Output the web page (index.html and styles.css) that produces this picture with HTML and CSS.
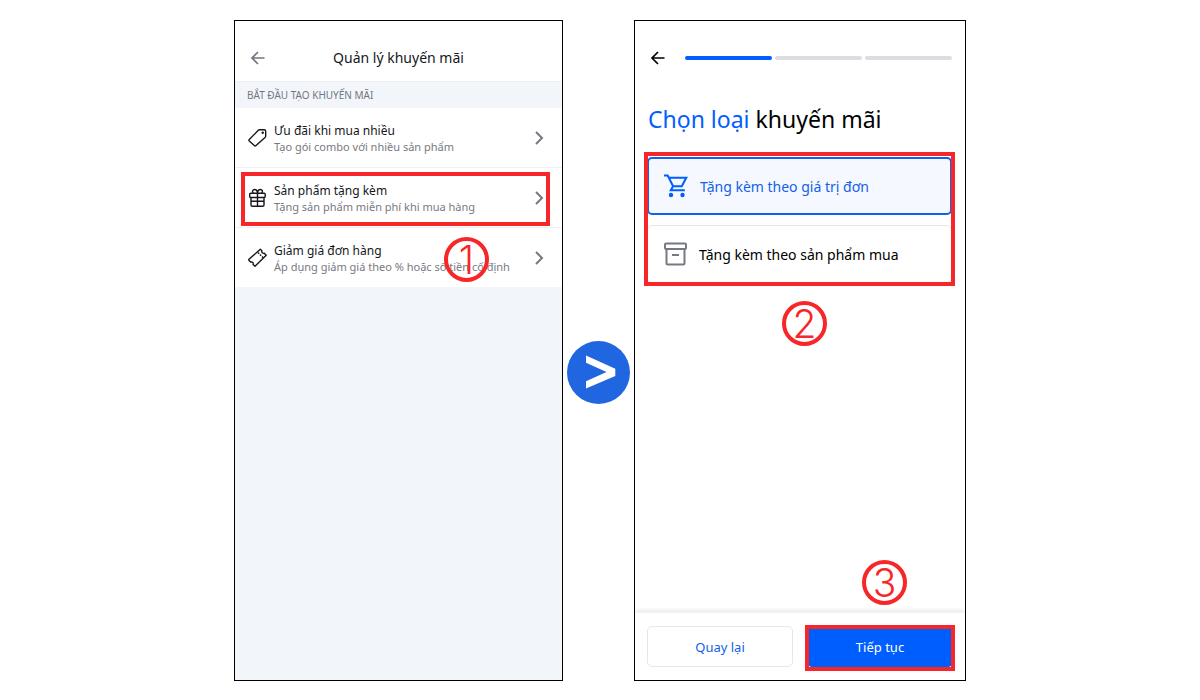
FILE: index.html
```html
<!DOCTYPE html>
<html lang="vi">
<head>
    <meta charset="UTF-8">
    <meta name="viewport" content="width=device-width, initial-scale=1.0">
    <title>Quản lý khuyến mãi</title>
    <link rel="stylesheet" href="styles.css">
</head>
<body>
    <main class="guide">
        <!-- Bước 1: danh sách khuyến mãi -->
        <section class="phone">
            <header class="topbar">
                <button class="back" type="button" aria-label="Trở về">
                    <svg width="16" height="16" viewBox="0 0 16 16"><path d="M14.500 8H2M8 2L2 8l6 6"/></svg>
                </button>
                <h1>Quản lý khuyến mãi</h1>
            </header>
            <div class="list-area">
                <h2>BẮT ĐẦU TẠO KHUYẾN MÃI</h2>
                <ul class="promo-list">
                    <li>
                        <a class="promo" href="#">
                            <svg class="promo-icon" width="20" height="20" viewBox="0 0 20 20"><path d="M11.500 1.800h4.700c.9 0 1.500.6 1.500 1.500v4.700c0 .5-.1.800-.4 1.200L8 17.600c-.5.500-1.200.500-1.700 0l-5-4.500c-.5-.5-.5-1.200 0-1.700l9-9.100c.3-.3.700-.5 1.200-.5z"/><circle class="dot" cx="14.700" cy="4.800" r="1.200"/></svg>
                            <span class="promo-text">
                                <strong>Ưu đãi khi mua nhiều</strong>
                                <small>Tạo gói combo với nhiều sản phẩm</small>
                            </span>
                            <svg class="chevron" width="10" height="16" viewBox="0 0 10 16"><path d="M2 2l6 6-6 6"/></svg>
                        </a>
                    </li>
                    <li>
                        <a class="promo marked" href="#">
                            <svg class="promo-icon" width="20" height="20" viewBox="0 0 20 20"><rect x="1.700" y="5.200" width="15.500" height="4.300" rx="1"/><path d="M3 9.500v7.500c0 .8.500 1.300 1.300 1.300h10.400c.8 0 1.300-.5 1.300-1.300V9.500M9.500 5.200v13.100M3 13.300h13M9.500 5.200C9.300 3 8.200 1.500 6.600 1.500c-2 0-2.700 2.300-1.300 3.700M9.500 5.200c.2-2.200 1.300-3.700 2.900-3.700 2 0 2.700 2.300 1.300 3.700"/></svg>
                            <span class="promo-text">
                                <strong>Sản phẩm tặng kèm</strong>
                                <small>Tặng sản phẩm miễn phí khi mua hàng</small>
                            </span>
                            <svg class="chevron" width="10" height="16" viewBox="0 0 10 16"><path d="M2 2l6 6-6 6"/></svg>
                        </a>
                    </li>
                    <li>
                        <a class="promo" href="#">
                            <svg class="promo-icon" width="20" height="20" viewBox="0 0 20 20"><path d="M1 11.200L12.300 1.300l1.600 1.400c-.5 1.700.7 3 2.400 2.600l1.900 1.900L7 18.300l-1.900-1.700c.6-1.700-.7-3-2.400-2.500L1 12.400c-.4-.4-.4-.8 0-1.200z"/><path d="M10 4.500l1.200 1.200M12 6.500l1.200 1.200M14 8.500l1.200 1.200"/></svg>
                            <span class="promo-text">
                                <strong>Giảm giá đơn hàng</strong>
                                <small>Áp dụng giảm giá theo % hoặc số tiền cố định</small>
                            </span>
                            <svg class="chevron" width="10" height="16" viewBox="0 0 10 16"><path d="M2 2l6 6-6 6"/></svg>
                        </a>
                        <span class="step step-one">1</span>
                    </li>
                </ul>
            </div>
        </section>

        <div class="next">
            <svg width="63" height="63" viewBox="0 0 63 63"><circle cx="31.500" cy="31.500" r="31.500"/><path d="M19 14.500l29.300 13.200v7.200L19 47.500v-7.200l20.500-9.200L19 21.700z"/></svg>
        </div>

        <!-- Bước 2: chọn loại khuyến mãi -->
        <section class="phone">
            <header class="progress-bar">
                <button class="back dark" type="button" aria-label="Trở về">
                    <svg width="16" height="16" viewBox="0 0 16 16"><path d="M14.500 8H2M8 2L2 8l6 6"/></svg>
                </button>
                <div class="progress">
                    <span class="done"></span>
                    <span></span>
                    <span></span>
                </div>
            </header>
            <h1 class="heading"><span>Chọn loại</span> khuyến mãi</h1>
            <div class="types">
                <button class="type selected" type="button">
                    <svg width="26" height="26" viewBox="0 0 26 26"><path d="M0 2.500h3.700l5.400 10.700h8.700l4.500-8.500H4.800M9 13.200l-2.200 4h14"/><circle cx="7" cy="22" r="2.200"/><circle cx="18.500" cy="22" r="2.200"/></svg>
                    Tặng kèm theo giá trị đơn
                </button>
                <button class="type" type="button">
                    <svg width="26" height="26" viewBox="0 0 26 26"><rect x="2" y="2.500" width="21" height="5.500" rx="1"/><path d="M3.500 8v14c0 1 .5 1.500 1.500 1.500h15c1 0 1.500-.5 1.500-1.500V8M9 14h7"/></svg>
                    Tặng kèm theo sản phẩm mua
                </button>
                <span class="step step-two">2</span>
            </div>
            <footer class="actions">
                <button class="btn" type="button">Quay lại</button>
                <button class="btn primary" type="button">Tiếp tục</button>
                <span class="step step-three">3</span>
            </footer>
        </section>
    </main>
</body>
</html>
```

FILE: styles.css
```css
* {
    box-sizing: border-box;
}

body {
    margin: 0;
    padding: 20px 20px 19px;
    background: #fff;
    color: #15171c;
    font-family: "Noto Sans", sans-serif;
}

button {
    font-family: inherit;
    cursor: pointer;
}

svg {
    display: block;
    flex: none;
    fill: none;
    stroke: currentColor;
}

h1, h2, ul {
    margin: 0;
    padding: 0;
    font-weight: 400;
    list-style: none;
}

.guide {
    display: grid;
    grid-template-columns: 329fr 71px 332fr;
    max-width: 732px;
    min-height: calc(100vh - 39px);
    margin: 0 auto;
}

.phone {
    display: flex;
    flex-direction: column;
    border: 1px solid #000;
    background: #fff;
}

.back {
    display: flex;
    padding: 0;
    border: 0;
    background: none;
    color: #74767f;
}

.back svg {
    stroke-width: 1.7;
}

.back.dark {
    color: #000;
}

/* Man hinh trai */
.topbar {
    display: grid;
    grid-template-columns: 16px 1fr 16px;
    align-items: center;
    padding: 26px 15px 12px;
}

.topbar h1 {
    font-size: 14px;
    line-height: 22px;
    text-align: center;
}

.list-area {
    flex: 1;
    border-top: 1px solid #eeeff2;
    background: #f2f6fb;
}

.list-area h2 {
    padding: 4px 12px;
    color: #74767f;
    font-size: 10px;
    line-height: 18px;
}

.promo-list li {
    position: relative;
    border-bottom: 1px solid #f0f1f4;
    background: #fff;
}

.promo-list li:last-child {
    border-bottom: 0;
}

.promo {
    position: relative;
    display: flex;
    align-items: center;
    gap: 6px;
    padding: 12px 18px 12px 13px;
    color: inherit;
    text-decoration: none;
}

.promo-icon {
    stroke-width: 1.4;
    stroke-linejoin: round;
}

.promo-icon .dot {
    fill: currentColor;
    stroke: none;
}

.promo-text {
    flex: 1;
    padding-top: 2px;
}

.promo-text strong,
.promo-text small {
    display: block;
    font-weight: 400;
    white-space: nowrap;
}

.promo-text strong {
    font-size: 12px;
    line-height: 17px;
}

.promo-text small {
    color: #777982;
    font-size: 11px;
    line-height: 16px;
}

.chevron {
    color: #777982;
    stroke-width: 2;
}

/* Khung do danh dau */
.marked::after,
.types::after,
.primary::after {
    content: "";
    position: absolute;
    inset: 4px 12px 1px 6px;
    border: 4px solid #f72729;
    pointer-events: none;
}

.step {
    position: absolute;
    width: 45px;
    height: 45px;
    border: 4px solid #f72729;
    border-radius: 50%;
    color: #f72729;
    font-family: Inter, sans-serif;
    font-size: 39px;
    font-weight: 300;
    line-height: 37px;
    text-align: center;
}

.step-one {
    top: 9px;
    right: 73px;
}

.next {
    display: flex;
    align-items: center;
    justify-content: center;
    padding-top: 43px;
}

.next svg {
    fill: #1f66e0;
    stroke: none;
}

.next path {
    fill: #fff;
}

/* Man hinh phai */
.progress-bar {
    display: flex;
    align-items: center;
    gap: 19px;
    padding: 29px 13px 35px 15px;
}

.progress {
    display: flex;
    flex: 1;
    gap: 3px;
}

.progress span {
    flex: 1;
    height: 4px;
    border-radius: 2px;
    background: #dcdde3;
}

.progress .done {
    background: #005eff;
}

.heading {
    padding: 0 13px;
    color: #000;
    font-size: 23px;
    line-height: 36px;
}

.heading span {
    color: #005eff;
}

.types {
    position: relative;
    display: flex;
    flex-direction: column;
    gap: 10px;
    margin: 15px 10px 0 9px;
    padding: 5px 3px 3px;
}

.types::after {
    inset: 0;
}

.type {
    display: flex;
    align-items: center;
    gap: 10px;
    min-height: 58px;
    padding: 0 15px;
    border: 1px solid #e6e7ea;
    border-radius: 5px;
    background: #fff;
    color: #000;
    font-size: 14px;
    text-align: left;
}

.type svg {
    color: #777982;
    stroke-width: 2;
}

.type.selected {
    border: 2px solid #1261e8;
    background: #f6f8ff;
    color: #1261e8;
}

.type.selected svg {
    color: #005eff;
}

.type circle {
    fill: currentColor;
    stroke: none;
}

.step-two {
    top: 149px;
    left: 138px;
}

.actions {
    position: relative;
    display: grid;
    grid-template-columns: 1fr 1fr;
    gap: 14px;
    margin-top: auto;
    padding: 13px 12px;
    box-shadow: 0 -4px 3px #f1f1f5;
    clip-path: inset(-60px 0 0);
}

.btn {
    position: relative;
    height: 41px;
    border: 1px solid #e6e7ea;
    border-radius: 5px;
    background: #fff;
    color: #1261e8;
    font-size: 13px;
}

.btn.primary {
    border-color: #005eff;
    background: #005eff;
    color: #fff;
}

.primary::after {
    inset: -2px -3px -5px -3px;
}

.step-three {
    right: 58px;
    bottom: 75px;
}
```
